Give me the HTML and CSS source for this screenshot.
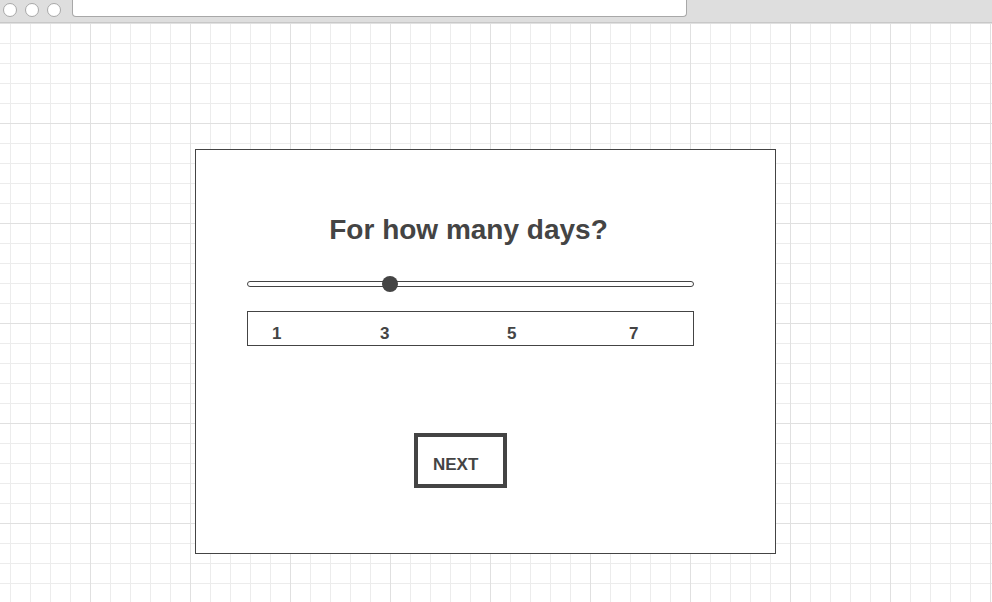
FILE: index.html
```html
<!DOCTYPE html>
<html>
<head>
<meta charset="utf-8">
<link rel="stylesheet" href="styles.css">
</head>
<body>
<div class="toolbar">
  <span class="dot"></span>
  <span class="dot"></span>
  <span class="dot"></span>
  <div class="urlbar"></div>
</div>
<div class="canvas">
  <div class="card">
    <div class="column">
      <h1 class="title">For how many days?</h1>
      <div class="slider">
        <div class="track"></div>
        <div class="thumb"></div>
      </div>
      <div class="labels">
        <span class="label">1</span>
        <span class="label">3</span>
        <span class="label">5</span>
        <span class="label">7</span>
      </div>
    </div>
    <div class="next">NEXT</div>
  </div>
</div>
</body>
</html>
```
FILE: styles.css
```css
html, body {
  margin: 0;
  padding: 0;
  width: 992px;
  height: 602px;
  overflow: hidden;
  font-family: "Liberation Sans", Arial, Helvetica, sans-serif;
  color: #444;
  background: #fff;
}

.toolbar {
  height: 22px;
  background: #dedede;
  border-bottom: 1px solid #c8c8c8;
  display: flex;
  align-items: flex-start;
  padding-left: 3px;
}

.dot {
  width: 12px;
  height: 12px;
  margin-top: 3px;
  margin-right: 8px;
  border: 1px solid #a8a8a8;
  border-radius: 50%;
  background: #fff;
  flex: none;
}

.dot:nth-child(3) {
  margin-right: 11px;
}

.urlbar {
  width: 613px;
  height: 16px;
  background: #fff;
  border: 1px solid #a8a8a8;
  border-top: none;
  border-radius: 0 0 4px 4px;
  flex: none;
}

.canvas {
  height: 579px;
  background-color: #fff;
  background-image:
    linear-gradient(to right, #e0e0e0 1px, transparent 1px),
    linear-gradient(to bottom, #e0e0e0 1px, transparent 1px),
    linear-gradient(to right, #ececec 1px, transparent 1px),
    linear-gradient(to bottom, #ececec 1px, transparent 1px);
  background-size: 100px 100px, 100px 100px, 20px 20px, 20px 20px;
  background-position: 90px 0, 0 0, 10px 0, 0 0;
  padding-top: 126px;
  box-sizing: border-box;
}

.card {
  margin-left: 195px;
  width: 579px;
  height: 339px;
  border: 1px solid #444;
  background: #fff;
  padding-top: 64px;
}

.column {
  margin-left: 51px;
  width: 447px;
}

.title {
  margin: 0;
  padding-right: 4px;
  font-size: 28px;
  line-height: 32px;
  font-weight: bold;
  text-align: center;
  color: #444;
}

.slider {
  position: relative;
  height: 16px;
  margin-top: 30px;
  display: flex;
  align-items: center;
}

.track {
  width: 100%;
  height: 4px;
  border: 1px solid #444;
  border-radius: 3px;
  background: #fff;
}

.thumb {
  position: absolute;
  left: 135px;
  top: 0;
  width: 16px;
  height: 16px;
  border-radius: 50%;
  background: #444;
}

.labels {
  margin-top: 19px;
  height: 21px;
  border: 1px solid #444;
  padding: 12px 0 0 24px;
  display: grid;
  grid-template-columns: 108px 127px 122px auto;
  font-size: 17px;
  line-height: 20px;
  font-weight: bold;
}

.next {
  margin: 87px 0 0 218px;
  width: 93px;
  height: 55px;
  border: 4px solid #444;
  background: #fff;
  padding: 18px 0 0 15px;
  box-sizing: border-box;
  font-size: 17px;
  line-height: 20px;
  font-weight: bold;
  color: #444;
}
```
